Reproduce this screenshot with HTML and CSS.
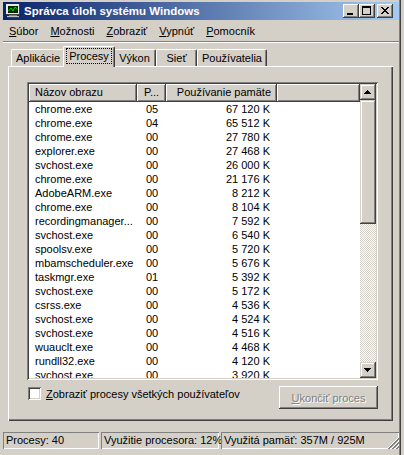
FILE: index.html
```html
<!DOCTYPE html>
<html>
<head>
<meta charset="utf-8">
<link rel="stylesheet" href="styles.css">
</head>
<body>
<div class="win">
  <div class="titlebar">
    <svg class="appicon" width="16" height="16" viewBox="0 0 16 16" shape-rendering="crispEdges">
      <rect x="1" y="1" width="14" height="11" fill="#404040"/>
      <rect x="1" y="1" width="13" height="10" fill="#E8E8E8"/>
      <rect x="3" y="3" width="10" height="7" fill="#002800"/>
      <polyline points="3.5,8 6,5 8,8 10,4 12.5,6" fill="none" stroke="#00E000" stroke-width="1" shape-rendering="auto"/>
      <rect x="4" y="12" width="8" height="1" fill="#808080"/>
      <rect x="2" y="13" width="12" height="2" fill="#C0C0C0"/>
      <rect x="2" y="14" width="12" height="1" fill="#404040"/>
    </svg>
    <span class="title">Správca úloh systému Windows</span>
    <div class="tbtns">
      <div class="tbtn"><svg width="16" height="14" viewBox="0 0 16 14" shape-rendering="crispEdges"><rect x="4" y="9" width="6" height="2" fill="#000"/></svg></div>
      <div class="tbtn"><svg width="16" height="14" viewBox="0 0 16 14" shape-rendering="crispEdges"><path d="M3 2h9v9h-9z M4 4v6h7v-6z" fill="#000" fill-rule="evenodd"/></svg></div>
      <div class="tbtn close"><svg width="16" height="14" viewBox="0 0 16 14" shape-rendering="crispEdges"><path d="M4 3h2v1h-2z M10 3h2v1h-2z M5 4h2v1h-2z M9 4h2v1h-2z M6 5h4v1h-4z M7 6h2v1h-2z M6 7h4v1h-4z M5 8h2v1h-2z M9 8h2v1h-2z M4 9h2v1h-2z M10 9h2v1h-2z" fill="#000"/></svg></div>
    </div>
  </div>
  <div class="menubar">
    <span class="mi"><u>S</u>úbor</span>
    <span class="mi"><u>M</u>ožnosti</span>
    <span class="mi"><u>Z</u>obraziť</span>
    <span class="mi"><u>V</u>ypnúť</span>
    <span class="mi"><u>P</u>omocník</span>
  </div>
  <div class="sep"></div>
  <div class="tabs">
    <div class="tab t1">Aplikácie</div>
    <div class="tab t2 sel"><span class="focus">Procesy</span></div>
    <div class="tab t3">Výkon</div>
    <div class="tab t4">Sieť</div>
    <div class="tab t5">Používatelia</div>
  </div>
  <div class="panel">
    <div class="list">
      <div class="lv">
        <div class="hdr">
          <div class="hc c1">Názov obrazu</div>
          <div class="hc c2">P...</div>
          <div class="hc c3">Používanie pamäte</div>
          <div class="hc c4"></div>
        </div>
        <div class="rows">
          <div class="row"><span class="c1">chrome.exe</span><span class="c2">05</span><span class="c3">67 120 K</span></div>
          <div class="row"><span class="c1">chrome.exe</span><span class="c2">04</span><span class="c3">65 512 K</span></div>
          <div class="row"><span class="c1">chrome.exe</span><span class="c2">00</span><span class="c3">27 780 K</span></div>
          <div class="row"><span class="c1">explorer.exe</span><span class="c2">00</span><span class="c3">27 468 K</span></div>
          <div class="row"><span class="c1">svchost.exe</span><span class="c2">00</span><span class="c3">26 000 K</span></div>
          <div class="row"><span class="c1">chrome.exe</span><span class="c2">00</span><span class="c3">21 176 K</span></div>
          <div class="row"><span class="c1">AdobeARM.exe</span><span class="c2">00</span><span class="c3">8 212 K</span></div>
          <div class="row"><span class="c1">chrome.exe</span><span class="c2">00</span><span class="c3">8 104 K</span></div>
          <div class="row"><span class="c1">recordingmanager...</span><span class="c2">00</span><span class="c3">7 592 K</span></div>
          <div class="row"><span class="c1">svchost.exe</span><span class="c2">00</span><span class="c3">6 540 K</span></div>
          <div class="row"><span class="c1">spoolsv.exe</span><span class="c2">00</span><span class="c3">5 720 K</span></div>
          <div class="row"><span class="c1">mbamscheduler.exe</span><span class="c2">00</span><span class="c3">5 676 K</span></div>
          <div class="row"><span class="c1">taskmgr.exe</span><span class="c2">01</span><span class="c3">5 392 K</span></div>
          <div class="row"><span class="c1">svchost.exe</span><span class="c2">00</span><span class="c3">5 172 K</span></div>
          <div class="row"><span class="c1">csrss.exe</span><span class="c2">00</span><span class="c3">4 536 K</span></div>
          <div class="row"><span class="c1">svchost.exe</span><span class="c2">00</span><span class="c3">4 524 K</span></div>
          <div class="row"><span class="c1">svchost.exe</span><span class="c2">00</span><span class="c3">4 516 K</span></div>
          <div class="row"><span class="c1">wuauclt.exe</span><span class="c2">00</span><span class="c3">4 468 K</span></div>
          <div class="row"><span class="c1">rundll32.exe</span><span class="c2">00</span><span class="c3">4 120 K</span></div>
          <div class="row"><span class="c1">svchost.exe</span><span class="c2">00</span><span class="c3">3 920 K</span></div>
        </div>
      </div>
      <div class="vscroll">
        <div class="sbtn"><svg width="16" height="16" viewBox="0 0 16 16" shape-rendering="crispEdges"><path d="M7 6h1v1h-1z M6 7h3v1h-3z M5 8h5v1h-5z M4 9h7v1h-7z" fill="#000"/></svg></div>
        <div class="thumb"></div>
        <div class="track"></div>
        <div class="sbtn"><svg width="16" height="16" viewBox="0 0 16 16" shape-rendering="crispEdges"><path d="M4 6h7v1h-7z M5 7h5v1h-5z M6 8h3v1h-3z M7 9h1v1h-1z" fill="#000"/></svg></div>
      </div>
    </div>
    <div class="bottom">
      <div class="chk"></div>
      <span class="chklabel"><u>Z</u>obraziť procesy všetkých používateľov</span>
      <div class="btn"><span><u>U</u>končiť proces</span></div>
    </div>
  </div>
  <div class="status">
    <div class="sp s1">Procesy: 40</div>
    <div class="sp s2">Využitie procesora: 12%</div>
    <div class="sp s3">Využitá pamäť: 357M / 925M
      <svg class="grip" width="12" height="12" viewBox="0 0 12 12" shape-rendering="crispEdges">
        <path d="M11 0h1v1h-1z M10 1h1v1h-1z M9 2h1v1h-1z M8 3h1v1h-1z M7 4h1v1h-1z M6 5h1v1h-1z M5 6h1v1h-1z M4 7h1v1h-1z M3 8h1v1h-1z M2 9h1v1h-1z M1 10h1v1h-1z M0 11h1v1h-1z" fill="#fff"/>
        <path d="M11 1h1v2h-1z M10 2h1v2h-1z M9 3h1v2h-1z M8 4h1v2h-1z M7 5h1v2h-1z M6 6h1v2h-1z M5 7h1v2h-1z M4 8h1v2h-1z M3 9h1v2h-1z M2 10h1v2h-1z M1 11h1v1h-1z" fill="#808080"/>
        <path d="M11 4h1v1h-1z M10 5h1v1h-1z M9 6h1v1h-1z M8 7h1v1h-1z M7 8h1v1h-1z M6 9h1v1h-1z M5 10h1v1h-1z M4 11h1v1h-1z" fill="#fff"/>
        <path d="M11 5h1v2h-1z M10 6h1v2h-1z M9 7h1v2h-1z M8 8h1v2h-1z M7 9h1v2h-1z M6 10h1v2h-1z M5 11h1v1h-1z" fill="#808080"/>
        <path d="M11 8h1v1h-1z M10 9h1v1h-1z M9 10h1v1h-1z M8 11h1v1h-1z" fill="#fff"/>
        <path d="M11 9h1v2h-1z M10 10h1v2h-1z M9 11h1v1h-1z" fill="#808080"/>
      </svg>
    </div>
  </div>
</div>
</body>
</html>
```
FILE: styles.css
```css
* { box-sizing: border-box; }
html, body { margin: 0; padding: 0; background: #D4D0C8; }
body { font-family: "Liberation Sans", Arial, sans-serif; font-size: 11px; color: #000; }
u { text-decoration: underline; text-underline-offset: 1px; }

.win {
  width: 404px; height: 455px; overflow: hidden;
  background: #D4D0C8;
  padding: 2px 5px 0 3px;
  display: flex; flex-direction: column;
  box-shadow: inset -3px 0 #D4D0C8, inset -4px 0 #404040, inset -5px 0 #808080;
}

.titlebar {
  height: 18px;
  background: linear-gradient(to right, #0A246A, #A6CAF0);
  display: flex; align-items: center;
  padding-left: 2px; padding-right: 6px;
}
.appicon { display: block; flex: none; }
.title {
  color: #fff; font-weight: bold; font-size: 11.5px;
  margin-left: 3px; white-space: nowrap; flex: 1;
}
.tbtns { display: flex; align-items: center; }
.tbtn {
  width: 16px; height: 14px; background: #D4D0C8;
  box-shadow: inset -1px -1px #404040, inset 1px 1px #fff, inset -2px -2px #808080, inset 2px 2px #D4D0C8;
}
.tbtn svg { display: block; }
.tbtn.close { margin-left: 2px; }

.menubar {
  height: 21px; display: flex; align-items: center; padding-top: 1px; margin-top: 0;
}
.mi { padding: 0 6px; white-space: nowrap; }

.sep { height: 2px; border-top: 1px solid #808080; border-bottom: 1px solid #fff; margin-top: 0; }

.tabs {
  height: 23px; margin-top: 3px; padding-left: 8px;
  display: flex; align-items: flex-end; position: relative; z-index: 1;
}
.tab {
  height: 17px; margin-bottom: 3px;
  background: #D4D0C8;
  border-top: 1px solid #fff; border-left: 1px solid #fff;
  border-right: 1px solid #404040;
  border-radius: 2px 2px 0 0;
  box-shadow: inset -1px 0 #808080;
  text-align: center; line-height: 16px; white-space: nowrap;
}
.t1 { width: 54px; }
.t2 { width: 48px; }
.t3 { width: 43px; }
.t4 { width: 41px; }
.t5 { width: 70px; }
.tab.sel {
  width: 52px; height: 21px; margin: 0 -2px 2px -2px; position: relative; z-index: 2;
  line-height: 18px; padding-top: 0;
}
.focus { outline: 1px dotted #000; outline-offset: 1px; padding: 0 1px; }

.panel {
  height: 355px; margin: -3px 6px 0 5px;
  box-shadow: inset 1px 1px #fff, inset -1px -1px #404040, inset -2px -2px #808080;
  padding: 16px 15px 0 19px;
  display: flex; flex-direction: column;
}

.list {
  height: 298px; width: 351px; background: #fff;
  padding: 2px;
  box-shadow: inset 1px 1px #808080, inset -1px -1px #fff, inset 2px 2px #404040, inset -2px -2px #D4D0C8;
  display: flex;
}
.lv { width: 331px; overflow: hidden; }
.hdr { display: flex; height: 18px; background: #D4D0C8; }
.hc {
  height: 18px; line-height: 17px; white-space: nowrap; overflow: hidden;
  box-shadow: inset -1px -1px #404040, inset 1px 1px #fff, inset -2px -2px #808080;
}
.hc.c1 { width: 108px; padding-left: 6px; }
.hc.c2 { width: 29px; padding-left: 7px; }
.hc.c3 { width: 111px; text-align: right; padding-right: 6px; }
.hc.c4 { flex: 1; }
.rows { height: 276px; overflow: hidden; }
.row { display: flex; height: 14px; line-height: 14px; white-space: nowrap; }
.row .c1 { width: 108px; padding-left: 6px; }
.row .c2 { width: 29px; padding-left: 9px; }
.row .c3 { width: 111px; text-align: right; padding-right: 7px; }

.vscroll { width: 16px; display: flex; flex-direction: column; }
.sbtn {
  width: 16px; height: 16px; flex: none; background: #D4D0C8;
  box-shadow: inset -1px -1px #404040, inset 1px 1px #D4D0C8, inset -2px -2px #808080, inset 2px 2px #fff;
}
.sbtn svg { display: block; }
.thumb {
  height: 124px; flex: none; background: #D4D0C8;
  box-shadow: inset -1px -1px #404040, inset 1px 1px #D4D0C8, inset -2px -2px #808080, inset 2px 2px #fff;
}
.track {
  flex: 1;
  background: repeating-conic-gradient(#fff 0 25%, #D4D0C8 0 50%) 0 0 / 2px 2px;
}

.bottom { display: flex; align-items: flex-start; margin-top: 6px; margin-left: 1px; }
.chk {
  width: 13px; height: 13px; background: #fff; margin-top: 1px; flex: none;
  box-shadow: inset 1px 1px #808080, inset -1px -1px #fff, inset 2px 2px #404040, inset -2px -2px #D4D0C8;
}
.chklabel { margin-left: 5px; line-height: 14px; margin-top: 1px; flex: 1; white-space: nowrap; }
.btn {
  width: 99px; height: 23px; margin-right: 0; flex: none;
  display: flex; align-items: center; justify-content: center;
  box-shadow: inset -1px -1px #404040, inset 1px 1px #fff, inset -2px -2px #808080, inset 2px 2px #D4D0C8;
  color: #808080; text-shadow: 1px 1px #fff;
}

.status { display: flex; height: 17px; margin-top: 11px; gap: 2px; }
.sp {
  height: 17px; line-height: 17px; padding-left: 3px; white-space: nowrap;
  box-shadow: inset 1px 1px #808080, inset -1px -1px #fff;
  position: relative;
}
.s1 { width: 96px; }
.s2 { width: 118px; }
.s3 { flex: 1; }
.grip { position: absolute; right: 0; bottom: 0; display: block; }
```
